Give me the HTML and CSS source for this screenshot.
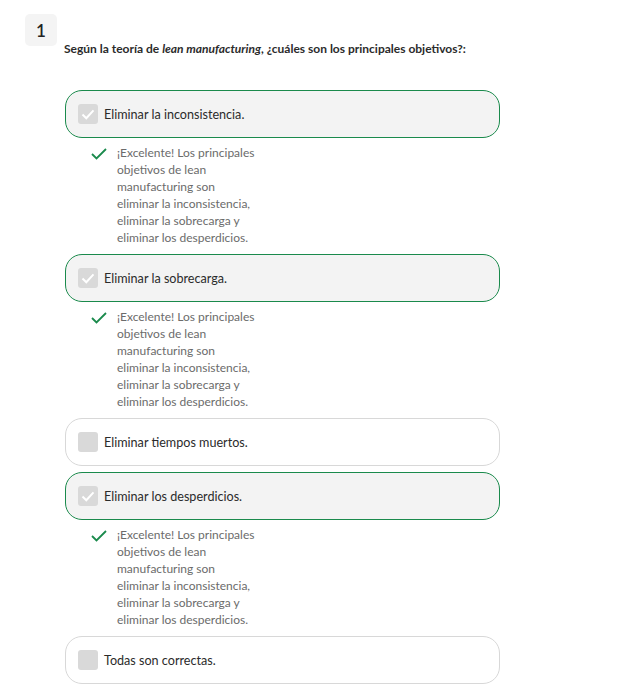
FILE: index.html
```html
<!DOCTYPE html>
<html lang="es">
<head>
<meta charset="utf-8">
<link rel="stylesheet" href="styles.css">
</head>
<body>
<div class="question">
  <div class="qhead">
    <div class="qnum">1</div>
    <p class="qtext">Según la teoría de <em>lean manufacturing</em>, ¿cuáles son los principales objetivos?:</p>
  </div>
  <div class="options">
    <div class="group">
      <div class="option selected">
        <span class="box"><svg viewBox="0 0 20 20" width="20" height="20"><path d="M4.5 10.5 L8.3 14.2 L15.5 6.3" fill="none" stroke="#fff" stroke-width="2"/></svg></span>
        <span class="label">Eliminar la inconsistencia.</span>
      </div>
      <div class="feedback">
        <svg class="ok" viewBox="0 0 16 12" width="16" height="12"><path d="M1 6 L5.5 10.5 L15 1" fill="none" stroke="#1a8a4c" stroke-width="1.8"/></svg>
        <p>¡Excelente! Los principales<br>objetivos de lean<br>manufacturing son<br>eliminar la inconsistencia,<br>eliminar la sobrecarga y<br>eliminar los desperdicios.</p>
      </div>
    </div>
    <div class="group">
      <div class="option selected">
        <span class="box"><svg viewBox="0 0 20 20" width="20" height="20"><path d="M4.5 10.5 L8.3 14.2 L15.5 6.3" fill="none" stroke="#fff" stroke-width="2"/></svg></span>
        <span class="label">Eliminar la sobrecarga.</span>
      </div>
      <div class="feedback">
        <svg class="ok" viewBox="0 0 16 12" width="16" height="12"><path d="M1 6 L5.5 10.5 L15 1" fill="none" stroke="#1a8a4c" stroke-width="1.8"/></svg>
        <p>¡Excelente! Los principales<br>objetivos de lean<br>manufacturing son<br>eliminar la inconsistencia,<br>eliminar la sobrecarga y<br>eliminar los desperdicios.</p>
      </div>
    </div>
    <div class="group">
      <div class="option">
        <span class="box"></span>
        <span class="label">Eliminar tiempos muertos.</span>
      </div>
    </div>
    <div class="group">
      <div class="option selected">
        <span class="box"><svg viewBox="0 0 20 20" width="20" height="20"><path d="M4.5 10.5 L8.3 14.2 L15.5 6.3" fill="none" stroke="#fff" stroke-width="2"/></svg></span>
        <span class="label">Eliminar los desperdicios.</span>
      </div>
      <div class="feedback">
        <svg class="ok" viewBox="0 0 16 12" width="16" height="12"><path d="M1 6 L5.5 10.5 L15 1" fill="none" stroke="#1a8a4c" stroke-width="1.8"/></svg>
        <p>¡Excelente! Los principales<br>objetivos de lean<br>manufacturing son<br>eliminar la inconsistencia,<br>eliminar la sobrecarga y<br>eliminar los desperdicios.</p>
      </div>
    </div>
    <div class="group">
      <div class="option">
        <span class="box"></span>
        <span class="label">Todas son correctas.</span>
      </div>
    </div>
  </div>
</div>
</body>
</html>
```

FILE: styles.css
```css
* { box-sizing: border-box; }
body {
  margin: 0;
  background: #fff;
  font-family: Lato, "Noto Sans", sans-serif;
  color: #2b2b2b;
}
.question {
  padding: 14px 0 0 25px;
}
.qhead {
  display: flex;
  align-items: flex-start;
}
.qnum {
  width: 32px;
  height: 32px;
  border-radius: 5px;
  background: #f4f4f4;
  display: flex;
  align-items: center;
  justify-content: center;
  font-size: 17px;
  font-weight: 600;
  color: #222;
  flex: none;
}
.qtext {
  margin: 27px 0 0 7px;
  font-size: 12px;
  font-weight: 700;
  line-height: 16px;
  color: #2b2b2b;
}
.options {
  margin: 33px 0 0 40px;
  display: flex;
  flex-direction: column;
  gap: 6px;
}
.group {
  display: flex;
  flex-direction: column;
}
.option {
  width: 435px;
  height: 48px;
  border: 1px solid #d8d8d8;
  border-radius: 17px;
  background: #fff;
  display: flex;
  align-items: center;
  padding-left: 12px;
  gap: 6px;
}
.option.selected {
  border-color: #1a8a4c;
  background: #f3f3f3;
}
.box {
  width: 20px;
  height: 20px;
  border-radius: 3px;
  background: #d9d9d9;
  flex: none;
  display: flex;
}
.label {
  font-size: 12.6px;
  color: #2b2b2b;
}
.feedback {
  display: flex;
  align-items: flex-start;
  padding: 6px 0 2px 26px;
  gap: 10px;
}
.ok {
  flex: none;
  margin-top: 4px;
}
.feedback p {
  margin: 0;
  font-size: 12px;
  line-height: 17px;
  color: #6b6b6b;
}
```
